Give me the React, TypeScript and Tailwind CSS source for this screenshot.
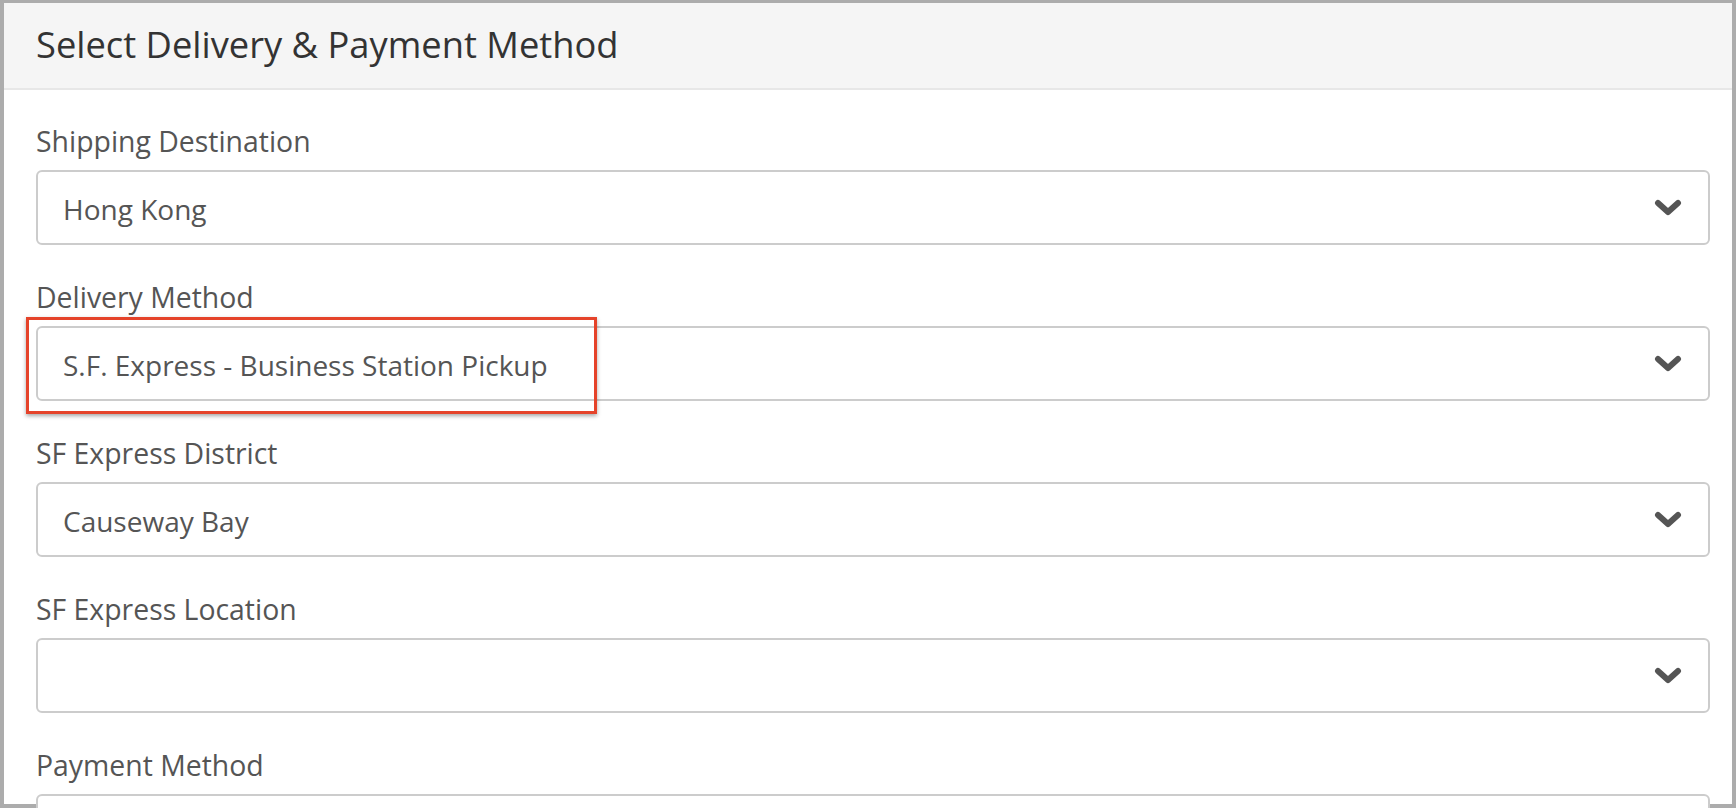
import React from "react";

const fields = [
    { label: "Shipping Destination", value: "Hong Kong" },
    { label: "Delivery Method", value: "S.F. Express - Business Station Pickup", highlight: true },
    { label: "SF Express District", value: "Causeway Bay" },
    { label: "SF Express Location", value: "" },
    { label: "Payment Method", value: "" },
];

function Chevron() {
    return (
        <svg width="28" height="18" viewBox="0 0 28 18" className="shrink-0">
            <path
                d="M4 4 L14 13 L24 4"
                fill="none"
                stroke="#555555"
                strokeWidth="6"
                strokeLinecap="round"
                strokeLinejoin="round"
            />
        </svg>
    );
}

export default function App() {
    return (
        <div
            className="h-[808px] w-[1736px] overflow-hidden bg-white"
            style={{ fontFamily: '"Open Sans", "Noto Sans", sans-serif' }}
        >
            <div className="h-full border-4 border-t-[3px] border-[#acacac] flex flex-col">
                <div className="flex h-[87px] shrink-0 items-center border-b-2 border-[#e7e7e7] bg-[#f5f5f5] pb-[3px] pl-8">
                    <h1 className="text-[36.3px] leading-none text-[#333333]">
                        Select Delivery &amp; Payment Method
                    </h1>
                </div>
                <div className="flex flex-col gap-[34px] pt-[33px] pl-8 pr-[22px]">
                    {fields.map((f, i) => (
                        <div key={i} className="flex flex-col gap-[11px]">
                            <label className="text-[28.4px] leading-[36px] text-[#555555]">
                                {f.label}
                            </label>
                            <div className="relative">
                                <div className="flex h-[75px] items-center justify-between rounded-[6px] border-2 border-[#cccccc] bg-white pl-[25px] pr-[26px]">
                                    <span className="pt-[2px] text-[28px] leading-[40px] text-[#555555]">{f.value}</span>
                                    <Chevron />
                                </div>
                                {f.highlight && (
                                    <div className="pointer-events-none absolute -top-[9px] -left-[10px] h-[97px] w-[571px] border-[3px] border-[#e5432a] shadow-[0_2px_4px_rgba(0,0,0,0.35)]" />
                                )}
                            </div>
                        </div>
                    ))}
                </div>
            </div>
        </div>
    );
}
